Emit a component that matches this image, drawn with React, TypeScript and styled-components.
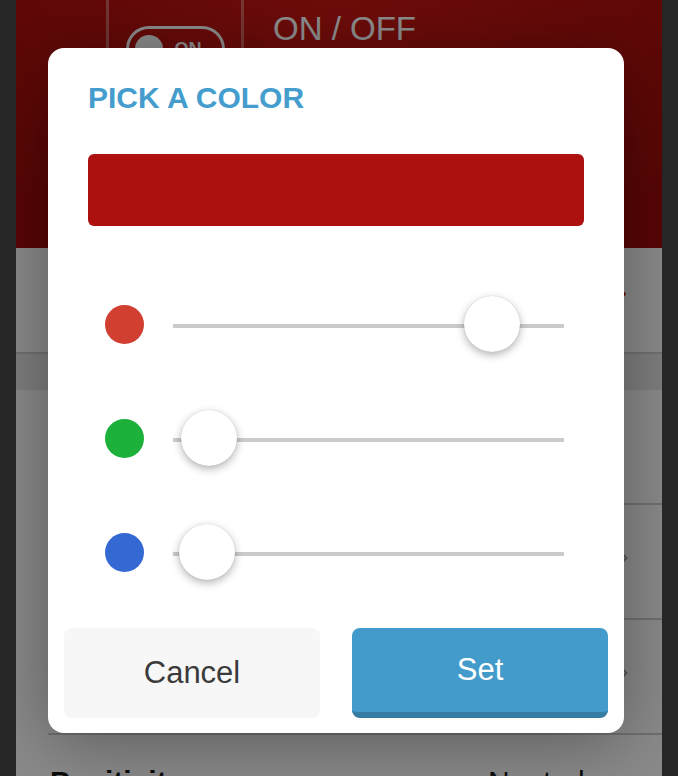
import React from 'react';
import styled, { createGlobalStyle } from 'styled-components';
import { ChevronRight } from 'lucide-react';

interface Channel {
  name: string;
  color: string;
  position: number;
}

const channels: Channel[] = [
  { name: 'red', color: '#d13f31', position: 0.868 },
  { name: 'green', color: '#1db03a', position: 0.024 },
  { name: 'blue', color: '#3469d3', position: 0.018 },
];

export default function App() {
  return (
    <>
      <GlobalStyle />
      <Screen>
        <Header>
          <ModeBox>
            <Pill>
              <PillKnob />
              <PillText>ON</PillText>
            </Pill>
          </ModeBox>
          <HeaderTitle>ON / OFF</HeaderTitle>
        </Header>

        <SettingRow>
          <span />
          <ChevronRight size={20} color="#c0140f" strokeWidth={3} />
        </SettingRow>
        <SectionBand />
        <ListRow />
        <ListRow>
          <ChevronRight size={20} color="#9a9a9a" strokeWidth={2.5} />
        </ListRow>
        <ListRow>
          <ChevronRight size={20} color="#9a9a9a" strokeWidth={2.5} />
        </ListRow>
        <LastRow>
          <RowLabel>Positivity</RowLabel>
          <RowValue>Neutral</RowValue>
        </LastRow>

        <Overlay>
          <Dialog>
            <DialogTitle>PICK A COLOR</DialogTitle>
            <Preview $color="#ad110f" />
            <Sliders>
              {channels.map((c) => (
                <SliderRow key={c.name}>
                  <Dot $color={c.color} />
                  <Track>
                    <TrackLine />
                    <Thumb style={{ left: `calc(${c.position} * (100% - 56px))` }} />
                  </Track>
                </SliderRow>
              ))}
            </Sliders>
            <Buttons>
              <CancelButton>Cancel</CancelButton>
              <SetButton>Set</SetButton>
            </Buttons>
          </Dialog>
        </Overlay>
      </Screen>
    </>
  );
}

const GlobalStyle = createGlobalStyle`
  html, body {
    margin: 0;
    padding: 0;
    background: #262626;
  }

  body {
    font-family: 'Liberation Sans', Helvetica, Arial, sans-serif;
  }

  * {
    box-sizing: border-box;
  }
`;

const Screen = styled.div`
  width: 646px;
  height: 776px;
  margin: 0 16px;
  background: #eeeeee;
  position: relative;
  overflow: hidden;
`;

const Header = styled.header`
  height: 248px;
  background: radial-gradient(ellipse 75% 95% at 50% 5%, #c01612 0%, #960c0a 100%);
  display: flex;
  align-items: flex-start;
  gap: 29px;
  padding-left: 90px;
`;

const ModeBox = styled.div`
  width: 138px;
  height: 150px;
  border: 3px solid rgba(255, 255, 255, 0.32);
  border-top: none;
  display: flex;
  justify-content: center;
  padding-top: 26px;
`;

const Pill = styled.div`
  width: 99px;
  height: 46px;
  border: 3px solid #f2f2f2;
  border-radius: 23px;
  display: flex;
  align-items: center;
  gap: 12px;
  padding: 0 6px;
`;

const PillKnob = styled.div`
  width: 28px;
  height: 28px;
  border-radius: 50%;
  background: #f2f2f2;
`;

const PillText = styled.span`
  font-size: 18px;
  font-weight: 700;
  color: #f2f2f2;
`;

const HeaderTitle = styled.h1`
  margin: 10px 0 0;
  font-size: 33px;
  line-height: 38px;
  font-weight: 400;
  color: #f4f4f4;
`;

const SettingRow = styled.div`
  height: 104px;
  display: flex;
  align-items: center;
  justify-content: space-between;
  padding: 0 30px 12px 34px;
`;

const SectionBand = styled.div`
  height: 38px;
  background: #dadada;
  border-top: 2px solid #c2c2c2;
`;

const ListRow = styled.div`
  height: 115px;
  margin-left: 32px;
  border-bottom: 2px solid #c2c2c2;
  display: flex;
  align-items: center;
  justify-content: flex-end;
  padding: 0 28px 8px 0;
`;

const LastRow = styled.div`
  display: flex;
  align-items: flex-start;
  padding: 29px 0 0 34px;
`;

const RowLabel = styled.span`
  font-size: 30px;
  line-height: 36px;
  font-weight: 700;
  color: #151515;
  width: 438px;
`;

const RowValue = styled.span`
  font-size: 30px;
  line-height: 36px;
  color: #151515;
`;

const Overlay = styled.div`
  position: absolute;
  inset: 0;
  background: rgba(0, 0, 0, 0.42);
  padding: 48px 0 0 32px;
`;

const Dialog = styled.div`
  width: 576px;
  height: 685px;
  background: #ffffff;
  border-radius: 16px;
  box-shadow: 0 8px 70px rgba(0, 0, 0, 0.35);
  display: flex;
  flex-direction: column;
  padding: 33px 16px 15px;
`;

const DialogTitle = styled.h2`
  margin: 0 24px;
  font-size: 30px;
  line-height: 34px;
  font-weight: 700;
  color: #449dcd;
`;

const Preview = styled.div<{ $color: string }>`
  margin: 39px 24px 0;
  height: 72px;
  border-radius: 6px;
  background: ${(p) => p.$color};
`;

const Sliders = styled.div`
  margin-top: 41px;
  display: flex;
  flex-direction: column;
`;

const SliderRow = styled.div`
  height: 114px;
  display: flex;
  align-items: center;
  padding: 0 44px 0 41px;
`;

const Dot = styled.div<{ $color: string }>`
  width: 39px;
  height: 39px;
  border-radius: 50%;
  background: ${(p) => p.$color};
  margin-right: 29px;
  flex-shrink: 0;
`;

const Track = styled.div`
  flex: 1;
  height: 56px;
  position: relative;
`;

const TrackLine = styled.div`
  position: absolute;
  left: 0;
  right: 0;
  top: 28px;
  height: 4px;
  background: #cbcbcb;
`;

const Thumb = styled.div`
  position: absolute;
  top: 0;
  width: 56px;
  height: 56px;
  border-radius: 50%;
  background: #ffffff;
  box-shadow: 0 3px 8px rgba(0, 0, 0, 0.3), 0 0 1px rgba(0, 0, 0, 0.2);
`;

const Buttons = styled.div`
  margin-top: 19px;
  height: 90px;
  display: grid;
  grid-template-columns: 1fr 1fr;
  gap: 32px;
`;

const CancelButton = styled.button`
  border: none;
  border-radius: 8px;
  background: #f7f7f7;
  font-family: 'Liberation Sans', Helvetica, Arial, sans-serif;
  font-size: 31px;
  color: #3b3b3b;
  cursor: pointer;
`;

const SetButton = styled.button`
  border: none;
  border-bottom: 6px solid #367da5;
  border-radius: 8px;
  background: #439bcb;
  font-family: 'Liberation Sans', Helvetica, Arial, sans-serif;
  font-size: 31px;
  color: #ffffff;
  cursor: pointer;
`;
